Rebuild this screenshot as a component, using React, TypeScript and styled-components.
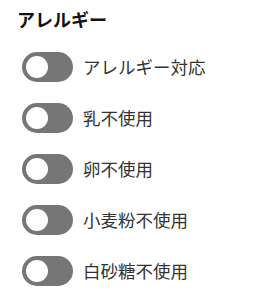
import styled, { createGlobalStyle } from 'styled-components';

const GlobalStyle = createGlobalStyle`
  body {
    margin: 0;
    background: #ffffff;
    font-family: "Noto Sans CJK JP", "Noto Sans", sans-serif;
  }
`;

const Panel = styled.div`
  padding: 6px 0 0 17px;
`;

const Title = styled.h3`
  margin: 0;
  font-size: 18px;
  font-weight: 700;
  line-height: 26px;
  color: #111111;
`;

const List = styled.div`
  display: flex;
  flex-direction: column;
  gap: 21px;
  margin-top: 20px;
  padding-left: 5px;
`;

const Row = styled.label`
  display: flex;
  align-items: center;
  gap: 10px;
  height: 30px;
  cursor: pointer;
`;

const Track = styled.span<{ $on?: boolean }>`
  position: relative;
  width: 51px;
  height: 30px;
  border-radius: 15px;
  background: ${(p) => (p.$on ? '#4caf50' : '#767676')};
  flex-shrink: 0;
`;

const Knob = styled.span<{ $on?: boolean }>`
  position: absolute;
  top: 4px;
  left: ${(p) => (p.$on ? '25px' : '4px')};
  width: 22px;
  height: 22px;
  border-radius: 50%;
  background: #ffffff;
`;

const Label = styled.span`
  font-size: 17.5px;
  color: #333333;
  line-height: 30px;
`;

const items = ['アレルギー対応', '乳不使用', '卵不使用', '小麦粉不使用', '白砂糖不使用'];

const App = () => {
  return (
    <>
      <GlobalStyle />
      <Panel>
        <Title>アレルギー</Title>
        <List>
          {items.map((item) => (
            <Row key={item}>
              <Track>
                <Knob />
              </Track>
              <Label>{item}</Label>
            </Row>
          ))}
        </List>
      </Panel>
    </>
  );
};

export default App;
